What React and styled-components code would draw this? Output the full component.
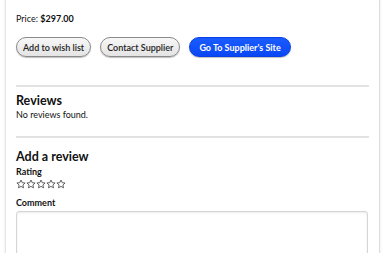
import React from "react";
import styled, { createGlobalStyle } from "styled-components";

const Global = createGlobalStyle`
  html, body { margin: 0; padding: 0; background: #ffffff; }
  body { font-family: Lato, "Noto Sans", sans-serif; color: #111; }
  * { box-sizing: border-box; }
`;

const Page = styled.div`
  width: 390px;
  height: 253px;
  overflow: hidden;
  padding: 0 11px 0 6px;
  background: #fff;
`;

const Card = styled.div`
  background: #fff;
  box-shadow: -1px 0 0 #e6e6e6, 1px 0 0 #dcdcdc, -2px 0 2px rgba(0,0,0,0.05), 2px 0 2px rgba(0,0,0,0.05);
  padding: 13px 10px 0 10px;
  min-height: 253px;
`;

const Price = styled.div`
  font-size: 9px;
  line-height: 12px;
  b { font-weight: 700; }
`;

const Actions = styled.div`
  display: flex;
  gap: 9px;
  margin-top: 12px;
`;

const Button = styled.button`
  font-family: inherit;
  height: 20px;
  padding: ${(p) => (p.$primary ? "0 9px" : "0 6px")};
  border-radius: 10px;
  font-size: 9px;
  cursor: pointer;
  white-space: nowrap;
  border: 1px solid ${(p) => (p.$primary ? "#0840e6" : "#8a8a8a")};
  background: ${(p) =>
    p.$primary
      ? "linear-gradient(#1a5cff, #0a47f5)"
      : "linear-gradient(#f7f7f7, #e4e4e4)"};
  color: ${(p) => (p.$primary ? "#fff" : "#222")};
  font-weight: ${(p) => (p.$primary ? 700 : 600)};
  box-shadow: 0 1px 1px rgba(0,0,0,0.25);
`;

const Divider = styled.hr`
  border: none;
  height: 2px;
  background: #e2e2e2;
  margin: ${(p) => p.$m || "0"};
`;

const Heading = styled.h3`
  margin: 0;
  font-size: 12.5px;
  line-height: 15px;
  font-weight: 700;
  color: #111;
`;

const Text = styled.div`
  font-size: 9px;
  line-height: 12px;
  margin-top: 1px;
`;

const Label = styled.div`
  font-size: 9px;
  line-height: 11px;
  font-weight: 700;
  margin-top: ${(p) => p.$mt || "0"};
`;

const Stars = styled.div`
  display: flex;
  gap: 0;
  margin-top: 2px;
`;

const Comment = styled.textarea`
  display: block;
  width: 352px;
  height: 60px;
  margin-top: 3px;
  border: 1px solid #d5d5d5;
  border-radius: 3px;
  box-shadow: inset 0 1px 2px rgba(0,0,0,0.08);
  resize: none;
`;

const Star = () => (
  <svg width="10" height="10" viewBox="0 0 24 24" fill="none" stroke="#444" strokeWidth="2" strokeLinejoin="round">
    <polygon points="12,2.5 14.9,8.8 21.8,9.6 16.6,14.3 18,21.2 12,17.7 6,21.2 7.4,14.3 2.2,9.6 9.1,8.8" />
  </svg>
);

export default function App() {
  return (
    <Page>
      <Global />
      <Card>
        <Price>Price: <b>$297.00</b></Price>
        <Actions>
          <Button>Add to wish list</Button>
          <Button>Contact Supplier</Button>
          <Button $primary>Go To Supplier's Site</Button>
        </Actions>
        <Divider $m="28px 0 6px 0" />
        <Heading>Reviews</Heading>
        <Text>No reviews found.</Text>
        <Divider $m="15px 0 11px 0" />
        <Heading>Add a review</Heading>
        <Label $mt="2px">Rating</Label>
        <Stars>
          {[0, 1, 2, 3, 4].map((i) => <Star key={i} />)}
        </Stars>
        <Label $mt="8px">Comment</Label>
        <Comment />
      </Card>
    </Page>
  );
}
